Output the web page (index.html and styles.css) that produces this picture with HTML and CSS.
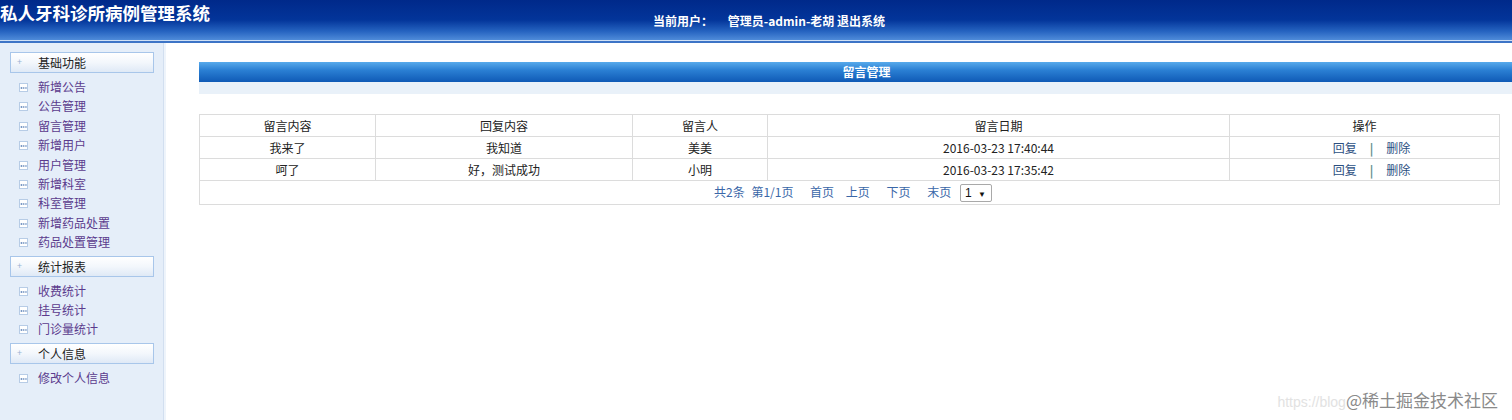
FILE: index.html
```html
<!doctype html>
<html>
  <head>
    <meta charset="utf-8">
    <title>私人牙科诊所病例管理系统</title>
    <link rel="stylesheet" href="styles.css">
  </head>
  <body>
    <div class="header">
      <div class="logo">私人牙科诊所病例管理系统</div>
      <div class="userinfo">
        <span class="label">当前用户：</span>
        <span>管理员-admin-老胡</span>
        <a href="#">退出系统</a>
      </div>
    </div>
    <div class="main">
      <div class="sidebar">
        <div class="group">基础功能</div>
        <ul>
          <li><a href="#">新增公告</a></li>
          <li><a href="#">公告管理</a></li>
          <li><a href="#">留言管理</a></li>
          <li><a href="#">新增用户</a></li>
          <li><a href="#">用户管理</a></li>
          <li><a href="#">新增科室</a></li>
          <li><a href="#">科室管理</a></li>
          <li><a href="#">新增药品处置</a></li>
          <li><a href="#">药品处置管理</a></li>
        </ul>
        <div class="group">统计报表</div>
        <ul>
          <li><a href="#">收费统计</a></li>
          <li><a href="#">挂号统计</a></li>
          <li><a href="#">门诊量统计</a></li>
        </ul>
        <div class="group">个人信息</div>
        <ul>
          <li><a href="#">修改个人信息</a></li>
        </ul>
      </div>
      <div class="content">
        <div class="titlebar">留言管理</div>
        <div class="substrip"></div>
        <table class="list">
          <colgroup>
            <col style="width:176px">
            <col style="width:257px">
            <col style="width:135px">
            <col style="width:462px">
            <col>
          </colgroup>
          <tr>
            <td>留言内容</td>
            <td>回复内容</td>
            <td>留言人</td>
            <td>留言日期</td>
            <td>操作</td>
          </tr>
          <tr>
            <td>我来了</td>
            <td>我知道</td>
            <td>美美</td>
            <td>2016-03-23 17:40:44</td>
            <td class="ops"><a href="#">回复</a><span class="sep">|</span><a href="#">删除</a></td>
          </tr>
          <tr>
            <td>呵了</td>
            <td>好，测试成功</td>
            <td>小明</td>
            <td>2016-03-23 17:35:42</td>
            <td class="ops"><a href="#">回复</a><span class="sep">|</span><a href="#">删除</a></td>
          </tr>
          <tr>
            <td colspan="5" class="pager">
              <a href="#">共2条</a>
              <a href="#">第1/1页</a>
              <a href="#" class="gap">首页</a>
              <a href="#" class="mid">上页</a>
              <a href="#" class="gap">下页</a>
              <a href="#" class="gap">末页</a>
              <span class="select">1 <span class="arrow">▼</span></span>
            </td>
          </tr>
        </table>
      </div>
    </div>
    <div class="watermark"><span class="url">https://blog</span><span class="brand">@稀土掘金技术社区</span></div>
  </body>
</html>
```

FILE: styles.css
```css
body {
  margin: 0;
  font-family: "Noto Sans CJK SC", "Liberation Sans", sans-serif;
  font-size: 12px;
  color: #222;
  background: #fff;
  height: 420px;
  overflow: hidden;
}

a {
  text-decoration: none;
}

/* top banner */
.header {
  height: 40px;
  background: linear-gradient(to bottom, #00298a 0%, #03359a 50%, #2563c0 78%, #4f8bd9 100%);
  border-bottom: 1px solid #cfe0f5;
  box-shadow: 0 2px 0 #3d74c6;
  position: relative;
}
.logo {
  color: #fff;
  font-size: 17.5px;
  font-weight: bold;
  line-height: 25px;
}
.userinfo {
  position: absolute;
  left: 653px;
  top: 12px;
  color: #fff;
  font-weight: bold;
  font-size: 12px;
}
.userinfo .label {
  margin-right: 12px;
}
.userinfo a {
  color: #fff;
}

.main {
  display: flex;
  margin-top: 2px;
  height: 377px;
}

/* left menu */
.sidebar {
  width: 163px;
  flex: none;
  background: #e5eef9;
  border-right: 1px solid #d2dff0;
  box-shadow: 2px 0 0 #eef4fb;
  padding-top: 9px;
}
.group {
  margin: 0 9px 0 10px;
  height: 19px;
  line-height: 19px;
  border: 1px solid #a8c6ea;
  background: linear-gradient(to bottom, #ffffff 0%, #f3f7fc 50%, #dfe9f6 100%);
  padding-left: 27px;
  position: relative;
  color: #222;
}
.group::before {
  content: "+";
  position: absolute;
  left: 6px;
  top: -1px;
  font-size: 9px;
  color: #9ab3d3;
}
.sidebar ul {
  list-style-type: none;
  margin: 4px 0 4px;
  padding: 0;
}
.sidebar li {
  height: 19.4px;
  line-height: 19.4px;
  padding-left: 38px;
  position: relative;
}
.sidebar li::before {
  content: "";
  position: absolute;
  left: 19px;
  top: 6px;
  width: 7px;
  height: 7px;
  border: 1px solid #b7cce6;
  background: #fff radial-gradient(circle, #6d8fbf 0.6px, transparent 1px) 0.5px 3px / 2.2px 2px repeat-x;
}
.sidebar li a {
  color: #5b3b8d;
}

/* right side */
.content {
  flex: 1;
  padding: 19px 12px 0 35px;
}
.titlebar {
  height: 20px;
  line-height: 20px;
  margin-right: -12px;
  background: linear-gradient(to bottom, #57aaeb 0%, #2b80d4 40%, #0f5ab6 100%);
  color: #fff;
  font-weight: bold;
  text-align: center;
  padding-left: 22px;
}
.substrip {
  height: 12px;
  margin-right: -12px;
  background: #e9f1f9;
}

.list {
  margin-top: 20px;
  width: 100%;
  border-collapse: collapse;
  border: 1px solid #d4d4d4;
  table-layout: fixed;
}
.list td {
  border: 1px solid #dcdcdc;
  height: 21px;
  padding: 0;
  text-align: center;
  color: #222;
}
.list td.ops {
  padding-left: 14px;
}
.ops a {
  color: #2c4f7f;
}
.ops .sep {
  color: #5b8c8c;
  margin: 0 13px 0 13px;
  font-weight: bold;
}
.list td.pager {
  height: 23px;
  padding-left: 3px;
}
.pager a {
  color: #3a67a8;
  margin-left: 4px;
}
.pager a.gap {
  margin-left: 14px;
}
.pager a.mid {
  margin-left: 9px;
}
.select {
  display: inline-block;
  margin-left: 6px;
  width: 32px;
  height: 18px;
  line-height: 17px;
  border: 1px solid #a9a9a9;
  border-radius: 2px;
  text-align: left;
  padding-left: 4px;
  box-sizing: border-box;
  vertical-align: middle;
  color: #111;
  font-family: "Liberation Sans", sans-serif;
}
.select .arrow {
  font-size: 8px;
  margin-left: 3px;
}

.watermark {
  position: absolute;
  right: 14px;
  bottom: 8px;
  font-size: 17px;
  white-space: nowrap;
  display: flex;
  align-items: baseline;
}
.watermark .url {
  color: #e2e2e2;
  font-size: 14px;
  font-family: "Liberation Sans", sans-serif;
}
.watermark .brand {
  color: #8a8a8a;
}
```
